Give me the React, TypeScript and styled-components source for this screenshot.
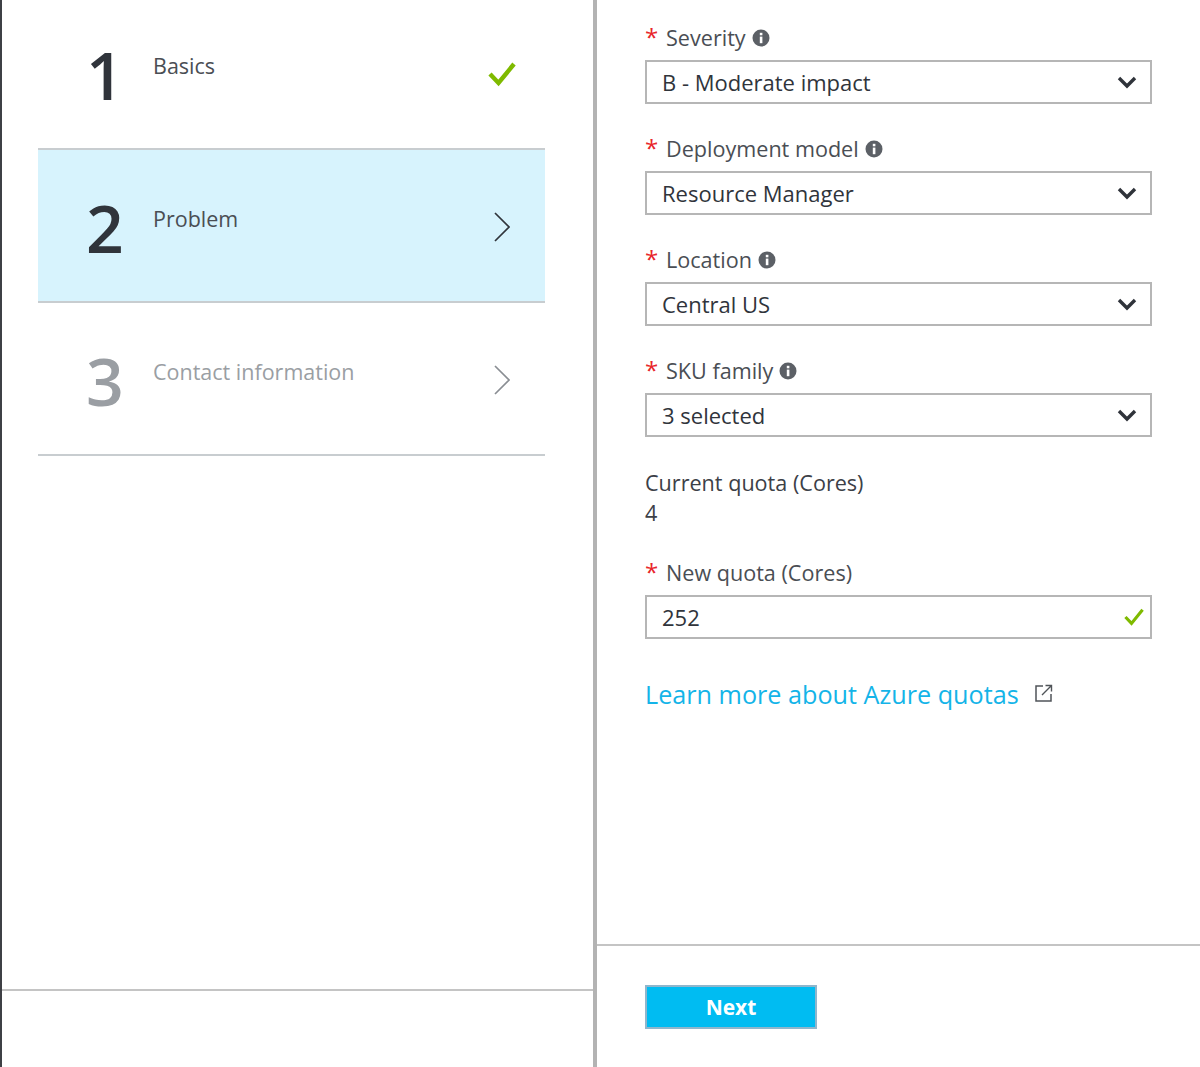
import React from "react";
import styled, { createGlobalStyle } from "styled-components";

const GlobalStyle = createGlobalStyle`
  html, body { margin: 0; padding: 0; background: #fff; }
  body { font-family: "Open Sans", "Noto Sans", sans-serif; color: #3c4047; }
`;

const Page = styled.div`
  width: 1200px;
  height: 1067px;
  display: flex;
  overflow: hidden;
`;

const LeftPane = styled.div`
  width: 591px;
  border-left: 2px solid #3e4045;
  border-right: 4px solid #b3b3b3;
  display: flex;
  flex-direction: column;
`;

const Steps = styled.div`
  flex: 1;
  margin-top: -3px;
  padding-left: 36px;
  width: 507px;
`;

const LeftFooter = styled.div`
  height: 76px;
  border-top: 2px solid #c4c4c4;
`;

const Step = styled.div<{ $active?: boolean; $muted?: boolean }>`
  height: 153px;
  box-sizing: border-box;
  display: flex;
  border-bottom: 2px solid #c8cdd0;
  background: ${(p) => (p.$active ? "#d7f3fd" : "transparent")};
  color: ${(p) => (p.$muted ? "#9a9ea3" : "#30343b")};
`;

const StepNumber = styled.div`
  width: 115px;
  padding: 33px 0 0 48px;
  box-sizing: border-box;
  font-size: 66px;
  font-weight: 600;
  line-height: 88px;
`;

const StepTitle = styled.div<{ $muted?: boolean }>`
  flex: 1;
  padding-top: 55px;
  font-size: 21.5px;
  line-height: 28px;
  color: ${(p) => (p.$muted ? "#9a9ea3" : "#4a4e54")};
`;

const StepIcon = styled.div`
  width: 87px;
  height: 32px;
  margin-top: 61px;
  display: flex;
  align-items: center;
  justify-content: center;
`;

const RightPane = styled.div`
  flex: 1;
  display: flex;
  flex-direction: column;
`;

const Form = styled.div`
  flex: 1;
  padding: 23px 48px 0 48px;
  display: flex;
  flex-direction: column;
`;

const Field = styled.div`
  margin-bottom: 30px;
`;

const LabelRow = styled.div`
  display: flex;
  align-items: center;
  height: 28px;
  margin-bottom: 9px;
  font-size: 21.6px;
  color: #4a4e54;
`;

const Star = styled.span`
  color: #e8262a;
  width: 21px;
  font-size: 24px;
  line-height: 28px;
`;

const InfoIcon = styled.svg`
  margin: 2px 0 0 6px;
  width: 18px;
  height: 18px;
`;

const Control = styled.div<{ $hasCheck?: boolean }>`
  height: 44px;
  box-sizing: border-box;
  border: 2px solid #b6b6b6;
  display: flex;
  align-items: center;
  justify-content: space-between;
  padding: 0 ${(p) => (p.$hasCheck ? 6 : 13)}px 0 15px;
  font-size: 22px;
  color: #30343b;
`;

const ReadOnly = styled.div`
  margin: 1px 0 30px;
  font-size: 21.6px;
  line-height: 30px;
  color: #3c4047;
`;

const LearnRow = styled.div`
  display: flex;
  align-items: center;
  margin-top: 8px;
`;

const LearnLink = styled.a`
  font-size: 25.2px;
  color: #14b4e8;
  text-decoration: none;
`;

const ExternalIcon = styled.svg`
  width: 20px;
  height: 20px;
  margin: -2px 0 0 15px;
`;

const Footer = styled.div`
  height: 123px;
  box-sizing: border-box;
  border-top: 2px solid #c4c4c4;
  padding: 39px 48px 0;
`;

const NextButton = styled.button`
  width: 172px;
  height: 44px;
  border: 2px solid #8fb6cc;
  background: #00bcf2;
  color: #fff;
  font-family: inherit;
  font-size: 21px;
  font-weight: 700;
  padding: 0;
`;

const Check = ({ size }: { size: number }) => (
  <svg width={size} height={size} viewBox="0 0 28 28">
    <path d="M2 14 L10.5 23 L26 4" fill="none" stroke="#7fba00" strokeWidth="4.4" />
  </svg>
);

const Chevron = ({ color }: { color: string }) => (
  <svg width="16" height="30" viewBox="0 0 16 30">
    <path d="M1 1 L15 15 L1 29" fill="none" stroke={color} strokeWidth="1.7" />
  </svg>
);

const Caret = () => (
  <svg width="20" height="14" viewBox="0 0 20 14">
    <path d="M2 3 L10 11 L18 3" fill="none" stroke="#2f333a" strokeWidth="3.4" />
  </svg>
);

const Info = () => (
  <InfoIcon viewBox="0 0 18 18">
    <circle cx="9" cy="9" r="8.5" fill="#5c6066" />
    <rect x="7.8" y="7.6" width="2.6" height="6.6" fill="#fff" />
    <rect x="7.8" y="3.8" width="2.6" height="2.5" fill="#fff" />
  </InfoIcon>
);

const External = () => (
  <ExternalIcon viewBox="0 0 20 20">
    <path d="M9 3 H2 V18 H17 V11" fill="none" stroke="#505459" strokeWidth="1.5" />
    <path d="M8 12 L17.5 2.5 M11.5 2.5 H17.5 V8.5" fill="none" stroke="#505459" strokeWidth="1.4" />
  </ExternalIcon>
);

const selects = [
  { label: "Severity", value: "B - Moderate impact" },
  { label: "Deployment model", value: "Resource Manager" },
  { label: "Location", value: "Central US" },
  { label: "SKU family", value: "3 selected" },
];

export default function App() {
  return (
    <Page>
      <GlobalStyle />
      <LeftPane>
        <Steps>
          <Step>
            <StepNumber>1</StepNumber>
            <StepTitle>Basics</StepTitle>
            <StepIcon><Check size={28} /></StepIcon>
          </Step>
          <Step $active>
            <StepNumber>2</StepNumber>
            <StepTitle>Problem</StepTitle>
            <StepIcon><Chevron color="#30343b" /></StepIcon>
          </Step>
          <Step $muted>
            <StepNumber>3</StepNumber>
            <StepTitle $muted>Contact information</StepTitle>
            <StepIcon><Chevron color="#8a8e93" /></StepIcon>
          </Step>
        </Steps>
        <LeftFooter />
      </LeftPane>
      <RightPane>
        <Form>
          {selects.map((s) => (
            <Field key={s.label}>
              <LabelRow>
                <Star>*</Star>
                {s.label}
                <Info />
              </LabelRow>
              <Control>
                {s.value}
                <Caret />
              </Control>
            </Field>
          ))}
          <ReadOnly>
            Current quota (Cores)
            <br />4
          </ReadOnly>
          <Field>
            <LabelRow>
              <Star>*</Star>
              New quota (Cores)
            </LabelRow>
            <Control $hasCheck>
              252
              <Check size={20} />
            </Control>
          </Field>
          <LearnRow>
            <LearnLink>Learn more about Azure quotas</LearnLink>
            <External />
          </LearnRow>
        </Form>
        <Footer>
          <NextButton>Next</NextButton>
        </Footer>
      </RightPane>
    </Page>
  );
}
